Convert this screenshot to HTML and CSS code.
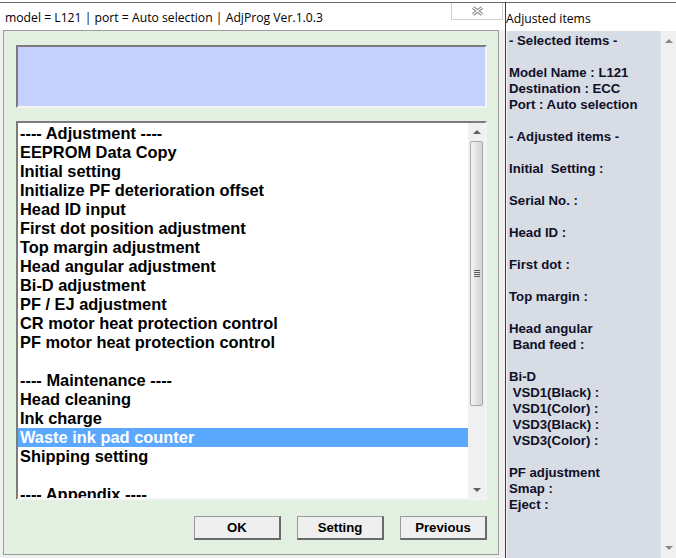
FILE: index.html
```html
<!DOCTYPE html>
<html lang="en">
<head>
    <meta charset="UTF-8">
    <title>AdjProg</title>
    <link rel="stylesheet" href="styles.css">
</head>
<body>
    <div class="screen">
        <div class="win-left">
            <div class="titlebar">
                <span class="title">model = L121 | port = Auto selection | AdjProg Ver.1.0.3</span>
                <button class="close-btn" aria-label="Close">
                    <svg width="13" height="10" viewBox="0 0 13 10">
                        <path d="M2 1.5 L11 8.5 M11 1.5 L2 8.5" stroke="#7a7a7a" stroke-width="3.2" fill="none"/>
                        <path d="M2 1.5 L11 8.5 M11 1.5 L2 8.5" stroke="#ffffff" stroke-width="1.2" fill="none"/>
                    </svg>
                </button>
            </div>
            <div class="frame">
                <div class="dialog">
                    <div class="status-box"></div>
                    <div class="listbox">
                        <ul class="items">
                            <li>---- Adjustment ----</li>
                            <li>EEPROM Data Copy</li>
                            <li>Initial setting</li>
                            <li>Initialize PF deterioration offset</li>
                            <li>Head ID input</li>
                            <li>First dot position adjustment</li>
                            <li>Top margin adjustment</li>
                            <li>Head angular adjustment</li>
                            <li>Bi-D adjustment</li>
                            <li>PF / EJ adjustment</li>
                            <li>CR motor heat protection control</li>
                            <li>PF motor heat protection control</li>
                            <li>&nbsp;</li>
                            <li>---- Maintenance ----</li>
                            <li>Head cleaning</li>
                            <li>Ink charge</li>
                            <li class="selected">Waste ink pad counter</li>
                            <li>Shipping setting</li>
                            <li>&nbsp;</li>
                            <li>---- Appendix ----</li>
                        </ul>
                        <div class="vscroll">
                            <span class="arrow up"></span>
                            <div class="thumb"><span class="grip"></span></div>
                            <span class="arrow down"></span>
                        </div>
                    </div>
                    <div class="buttons">
                        <button class="btn">OK</button>
                        <button class="btn">Setting</button>
                        <button class="btn">Previous</button>
                    </div>
                </div>
            </div>
        </div>
        <div class="win-right">
            <div class="titlebar">
                <span class="title">Adjusted items</span>
            </div>
            <div class="panel">
                <pre class="report">- Selected items -

Model Name : L121
Destination : ECC
Port : Auto selection

- Adjusted items -

Initial  Setting :

Serial No. :

Head ID :

First dot :

Top margin :

Head angular
 Band feed :

Bi-D
 VSD1(Black) :
 VSD1(Color) :
 VSD3(Black) :
 VSD3(Color) :

PF adjustment
Smap :
Eject :</pre>
                <div class="panel-scroll">
                    <span class="arrow up"></span>
                    <span class="arrow down"></span>
                </div>
            </div>
        </div>
    </div>
</body>
</html>
```

FILE: styles.css
```css
:root {
    --dialog-bg: #e2f0e2;
    --panel-bg: #d7dce5;
    --status-bg: #c6d0fc;
    --select-bg: #5aa9ff;
    --scroll-bg: #f0f0f0;
    --text-color: #111111;
}

html, body {
    margin: 0;
    padding: 0;
}

body {
    background: #ffffff;
    color: var(--text-color);
    font-family: "Liberation Sans", Arial, sans-serif;
}

.screen {
    display: flex;
    width: 676px;
    height: 558px;
    padding-top: 2px;
    box-sizing: border-box;
    overflow: hidden;
}

/* title bars */
.titlebar {
    display: flex;
    align-items: center;
    height: 28px;
    border-top: 1px solid #6a6a6a;
    background: #ffffff;
    font-family: "Open Sans", "Noto Sans", sans-serif;
    font-size: 12.2px;
    color: #000;
}

.win-left .titlebar {
    justify-content: space-between;
    padding-left: 5px;
}

.title {
    white-space: nowrap;
    margin-top: 2px;
}

.close-btn {
    align-self: flex-start;
    width: 52px;
    height: 17px;
    margin-right: 2px;
    padding: 0;
    border: 1px solid #cfcfcf;
    border-top: none;
    background: #ffffff;
    display: flex;
    align-items: center;
    justify-content: center;
}

/* left window */
.win-left {
    width: 505px;
    display: flex;
    flex-direction: column;
    background: #f0f0f0;
}

.frame {
    flex: 1;
    padding: 0 6px 3px 3px;
}

.dialog {
    height: 525px;
    box-sizing: border-box;
    border: 1px solid #9c9c9c;
    background: var(--dialog-bg);
    padding: 14px 11px 0 12px;
}

.status-box {
    width: 471px;
    height: 63px;
    box-sizing: border-box;
    background: var(--status-bg);
    border: 2px solid #f4f4f4;
    border-top-color: #7c7c7c;
    border-left-color: #7c7c7c;
}

.listbox {
    display: flex;
    width: 471px;
    height: 379px;
    margin-top: 13px;
    box-sizing: border-box;
    background: #ffffff;
    border: 2px solid #f4f4f4;
    border-top-color: #7c7c7c;
    border-left-color: #7c7c7c;
    overflow: hidden;
}

.items {
    flex: 1;
    list-style: none;
    margin: 0;
    padding: 1px 0 0;
    font-weight: bold;
    font-size: 16.4px;
    line-height: 19px;
    color: #000;
}

.items li {
    height: 19px;
    padding-left: 2px;
    white-space: nowrap;
}

.items li.selected {
    background: var(--select-bg);
    color: #ffffff;
}

.vscroll {
    width: 17px;
    display: flex;
    flex-direction: column;
    align-items: center;
    background: var(--scroll-bg);
}

.arrow {
    width: 0;
    height: 0;
    border-left: 4px solid transparent;
    border-right: 4px solid transparent;
}

.arrow.up {
    border-bottom: 4px solid #606060;
    margin-top: 7px;
}

.arrow.down {
    border-top: 4px solid #606060;
    margin-top: auto;
    margin-bottom: 6px;
}

.thumb {
    width: 13px;
    height: 265px;
    margin-top: 7px;
    box-sizing: border-box;
    border: 1px solid #a9a9a9;
    border-radius: 2px;
    background: linear-gradient(to right, #f4f4f4, #e2e2e2 55%, #d2d2d2);
    display: flex;
    align-items: center;
    justify-content: center;
}

.grip {
    width: 6px;
    height: 7px;
    background: repeating-linear-gradient(to bottom, #5c5c5c 0, #5c5c5c 1px, transparent 1px, transparent 2px);
}

.buttons {
    display: flex;
    justify-content: flex-end;
    gap: 16px;
    width: 471px;
    margin-top: 16px;
}

.btn {
    width: 87px;
    height: 24px;
    padding: 0;
    background: #efefef;
    border: 1px solid #9a9a9a;
    border-right: 2px solid #6a6a6a;
    border-bottom: 2px solid #6a6a6a;
    font-family: "Liberation Sans", Arial, sans-serif;
    font-weight: bold;
    font-size: 13.2px;
    color: #000;
}

/* right window */
.win-right {
    flex: 1;
    display: flex;
    flex-direction: column;
    border-left: 1px solid #3c3c3c;
}

.win-right .titlebar {
    padding-left: 0;
}

.panel {
    flex: 1;
    display: flex;
    border-left: 1px solid #f4f4f4;
    background: var(--panel-bg);
}

.report {
    flex: 1;
    margin: 0;
    padding: 2px 0 0 2px;
    font-family: "Liberation Sans", Arial, sans-serif;
    font-weight: bold;
    font-size: 13.2px;
    line-height: 16px;
    color: #101028;
}

.panel-scroll {
    width: 14px;
    display: flex;
    flex-direction: column;
    align-items: center;
    border-left: 1px solid #f8f8f8;
    background: var(--scroll-bg);
}

.panel-scroll .arrow.up {
    border-bottom-color: #8a8a8a;
    margin-top: 8px;
}

.panel-scroll .arrow.down {
    border-top-color: #8a8a8a;
    margin-bottom: 8px;
}
```
